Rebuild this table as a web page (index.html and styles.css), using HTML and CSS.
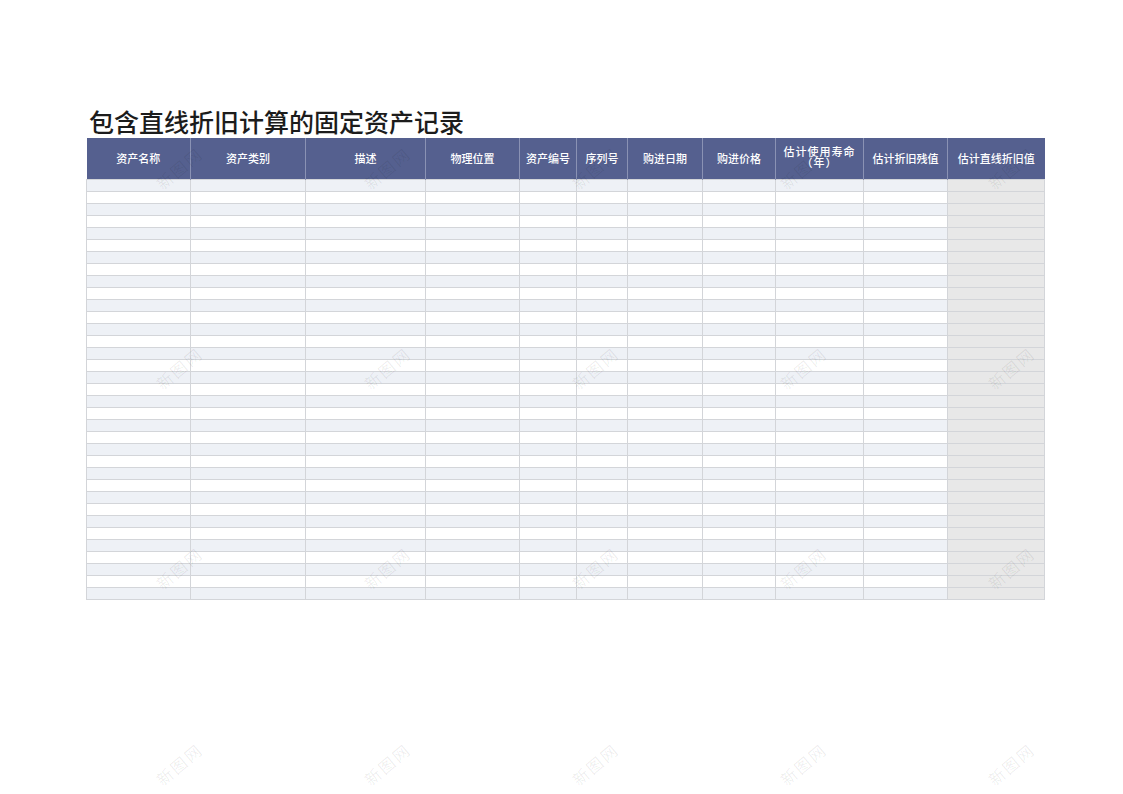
FILE: index.html
```html
<!DOCTYPE html>
<html lang="zh">
<head>
<meta charset="utf-8">
<link rel="stylesheet" href="styles.css">
</head>
<body>
<div class="page">
  <h1 class="title">包含直线折旧计算的固定资产记录</h1>
  <table class="sheet">
    <colgroup>
      <col style="width:104px"><col style="width:115px"><col style="width:120px"><col style="width:94px"><col style="width:57px"><col style="width:51px"><col style="width:75px"><col style="width:73px"><col style="width:88px"><col style="width:84px"><col style="width:97px">
    </colgroup>
    <thead>
      <tr>
        <th>资产名称</th><th>资产类别</th><th>描述</th><th>物理位置</th><th>资产编号</th><th>序列号</th><th>购进日期</th><th>购进价格</th><th class="wrap">估计使用寿命（年）</th><th>估计折旧残值</th><th>估计直线折旧值</th>
      </tr>
    </thead>
    <tbody id="rows"></tbody>
  </table>
</div>
<div class="marks" id="marks"></div>
<script>
  var tb = document.getElementById('rows');
  var html = '';
  for (var r = 0; r < 35; r++) {
    html += '<tr class="' + (r % 2 === 0 ? 'alt' : '') + '">';
    for (var c = 0; c < 11; c++) html += '<td' + (c === 10 ? ' class="calc"' : '') + '></td>';
    html += '</tr>';
  }
  tb.innerHTML = html;
  var m = document.getElementById('marks');
  var xs = [180, 388, 596, 804, 1012], ys = [170, 370, 570, 766], mh = '';
  for (var i = 0; i < ys.length; i++) for (var j = 0; j < xs.length; j++)
    mh += '<span class="mark" style="left:' + (xs[j] - 28) + 'px;top:' + (ys[i] - 12) + 'px">新图网</span>';
  m.innerHTML = mh;
</script>
</body>
</html>
```
FILE: styles.css
```css
html, body {
  margin: 0;
  padding: 0;
  background: #ffffff;
}
body {
  font-family: "Noto Sans CJK SC", "Noto Sans", sans-serif;
  width: 1123px;
  height: 794px;
  overflow: hidden;
  position: relative;
}
.page {
  padding: 105px 0 0 86px;
}
.title {
  margin: 0 0 0 3px;
  font-size: 25px;
  line-height: 33px;
  font-weight: 500;
  color: #1c1c1c;
}
.sheet {
  border-collapse: collapse;
  table-layout: fixed;
  width: 958px;
}
.sheet th {
  box-sizing: border-box;
  background: #55608f;
  color: #ffffff;
  font-size: 11px;
  font-weight: 500;
  height: 41px;
  padding: 0 2px;
  border-left: 1px solid #8a92b4;
  text-align: center;
  vertical-align: middle;
  line-height: 12px;
}
.sheet th:first-child { border-left: none; }
.sheet th.wrap {
  vertical-align: top;
  padding-top: 8px;
  letter-spacing: 1px;
  line-height: 11px;
}
.sheet td {
  height: 11px;
  padding: 0;
  border: 1px solid #d3d5d9;
  background: #ffffff;
}
.sheet tr.alt td { background: #eef1f6; }
.sheet td.calc, .sheet tr.alt td.calc { background: #e8e8e8; }
.marks {
  position: absolute;
  inset: 0;
  pointer-events: none;
}
.mark {
  position: absolute;
  font-size: 16px;
  line-height: 20px;
  color: rgba(0, 0, 0, 0.07);
  transform: rotate(-40deg);
  letter-spacing: 2px;
  white-space: nowrap;
}
```
